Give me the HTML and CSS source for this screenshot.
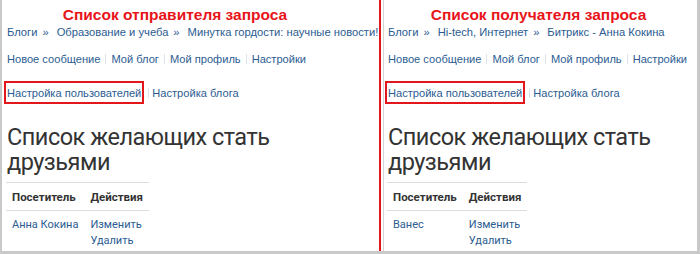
FILE: index.html
```html
<!DOCTYPE html>
<html lang="ru">
<head>
    <meta charset="UTF-8">
    <title>Список желающих стать друзьями</title>
    <link rel="stylesheet" href="styles.css">
</head>
<body>

    <div class="shot">
        <div class="panel panel-left">
            <div class="caption caption-left">Список отправителя запроса</div>
            <div class="crumbs">
                <a href="#">Блоги</a><span class="raquo">»</span><a href="#">Образование и учеба</a><span class="raquo">»</span><a href="#">Минутка гордости: научные новости!</a>
            </div>
            <div class="menu">
                <a href="#">Новое сообщение</a><span class="sep"></span><a href="#">Мой блог</a><span class="sep"></span><a href="#">Мой профиль</a><span class="sep"></span><a href="#">Настройки</a>
            </div>
            <div class="menu menu-sub">
                <a href="#" class="marked">Настройка пользователей</a><span class="sep"></span><a href="#">Настройка блога</a>
            </div>
            <h1>Список желающих стать друзьями</h1>
            <table class="friends">
                <thead>
                    <tr><th>Посетитель</th><th>Действия</th></tr>
                </thead>
                <tbody>
                    <tr>
                        <td><a href="#">Анна Кокина</a></td>
                        <td><a href="#">Изменить</a><br><a href="#">Удалить</a></td>
                    </tr>
                </tbody>
            </table>
        </div>

        <div class="divider"></div>

        <div class="panel panel-right">
            <div class="caption caption-right">Список получателя запроса</div>
            <div class="crumbs">
                <a href="#">Блоги</a><span class="raquo">»</span><a href="#">Hi-tech, Интернет</a><span class="raquo">»</span><a href="#">Битрикс - Анна Кокина</a>
            </div>
            <div class="menu">
                <a href="#">Новое сообщение</a><span class="sep"></span><a href="#">Мой блог</a><span class="sep"></span><a href="#">Мой профиль</a><span class="sep"></span><a href="#">Настройки</a>
            </div>
            <div class="menu menu-sub">
                <a href="#" class="marked">Настройка пользователей</a><span class="sep"></span><a href="#">Настройка блога</a>
            </div>
            <h1>Список желающих стать друзьями</h1>
            <table class="friends">
                <thead>
                    <tr><th>Посетитель</th><th>Действия</th></tr>
                </thead>
                <tbody>
                    <tr>
                        <td><a href="#">Ванес</a></td>
                        <td><a href="#">Изменить</a><br><a href="#">Удалить</a></td>
                    </tr>
                </tbody>
            </table>
        </div>
    </div>

</body>
</html>
```

FILE: styles.css
```css
body {
    margin: 0;
    padding: 0;
    background-color: #fff;
    font-family: 'Liberation Sans', Arial, sans-serif;
    color: #333;
}

a {
    color: #2b5c91;
    text-decoration: none;
}

.shot {
    display: flex;
    width: 700px;
    height: 254px;
    box-sizing: border-box;
    border-left: 2px solid #c9c9c9;
    border-right: 3px solid #c9c9c9;
    border-bottom: 3px solid #c9c9c9;
    overflow: hidden;
}

.panel {
    white-space: nowrap;
    overflow: hidden;
}

.panel-left {
    width: 372px;
    padding-left: 5px;
}

.panel-right {
    flex: 1;
    padding-left: 4px;
    border-left: 1px solid #d4d4d4;
}

.divider {
    width: 2px;
    margin-right: 2px;
    background-color: #e3161c;
}

.caption {
    padding-top: 4px;
    height: 20px;
    font-size: 15.5px;
    line-height: 22px;
    font-weight: bold;
    color: #e8141a;
    text-align: center;
}

.caption-left {
    padding-right: 36px;
}

.caption-right {
    padding-right: 8px;
}

.crumbs {
    font-size: 11.2px;
    line-height: 16px;
}

.raquo {
    color: #2b5c91;
    padding: 0 8px 0 5px;
}

.menu {
    margin-top: 11px;
    font-size: 11.1px;
    line-height: 16px;
}

.sep {
    display: inline-block;
    width: 1px;
    height: 10px;
    margin: 0 5px 0 5px;
    background-color: #dde3ea;
    vertical-align: -1px;
}

.menu-sub {
    margin-top: 14px;
}

.menu-sub .sep {
    margin: 0 3px 0 4px;
}

.marked {
    display: inline-block;
    margin-left: -3px;
    padding: 2px 1px 1px 1px;
    border: 2px solid #e3161c;
}

h1 {
    margin: 21px 0 0 0;
    width: 300px;
    white-space: normal;
    font-family: Roboto, 'Open Sans', sans-serif;
    font-size: 23.5px;
    font-weight: normal;
    letter-spacing: -0.5px;
    line-height: 25px;
    color: #333;
}

.friends {
    margin: 7px 0 0 -1px;
    border-collapse: collapse;
    font-family: Roboto, 'Open Sans', sans-serif;
}

.friends th {
    padding: 6px 6px 5px 6px;
    font-size: 11.5px;
    line-height: 16px;
    font-weight: bold;
    text-align: left;
    border-top: 1px solid #dddddd;
    border-bottom: 1px solid #dddddd;
}

.friends td {
    padding: 6px 6px 0 6px;
    font-size: 11px;
    line-height: 16px;
    vertical-align: top;
}
```
